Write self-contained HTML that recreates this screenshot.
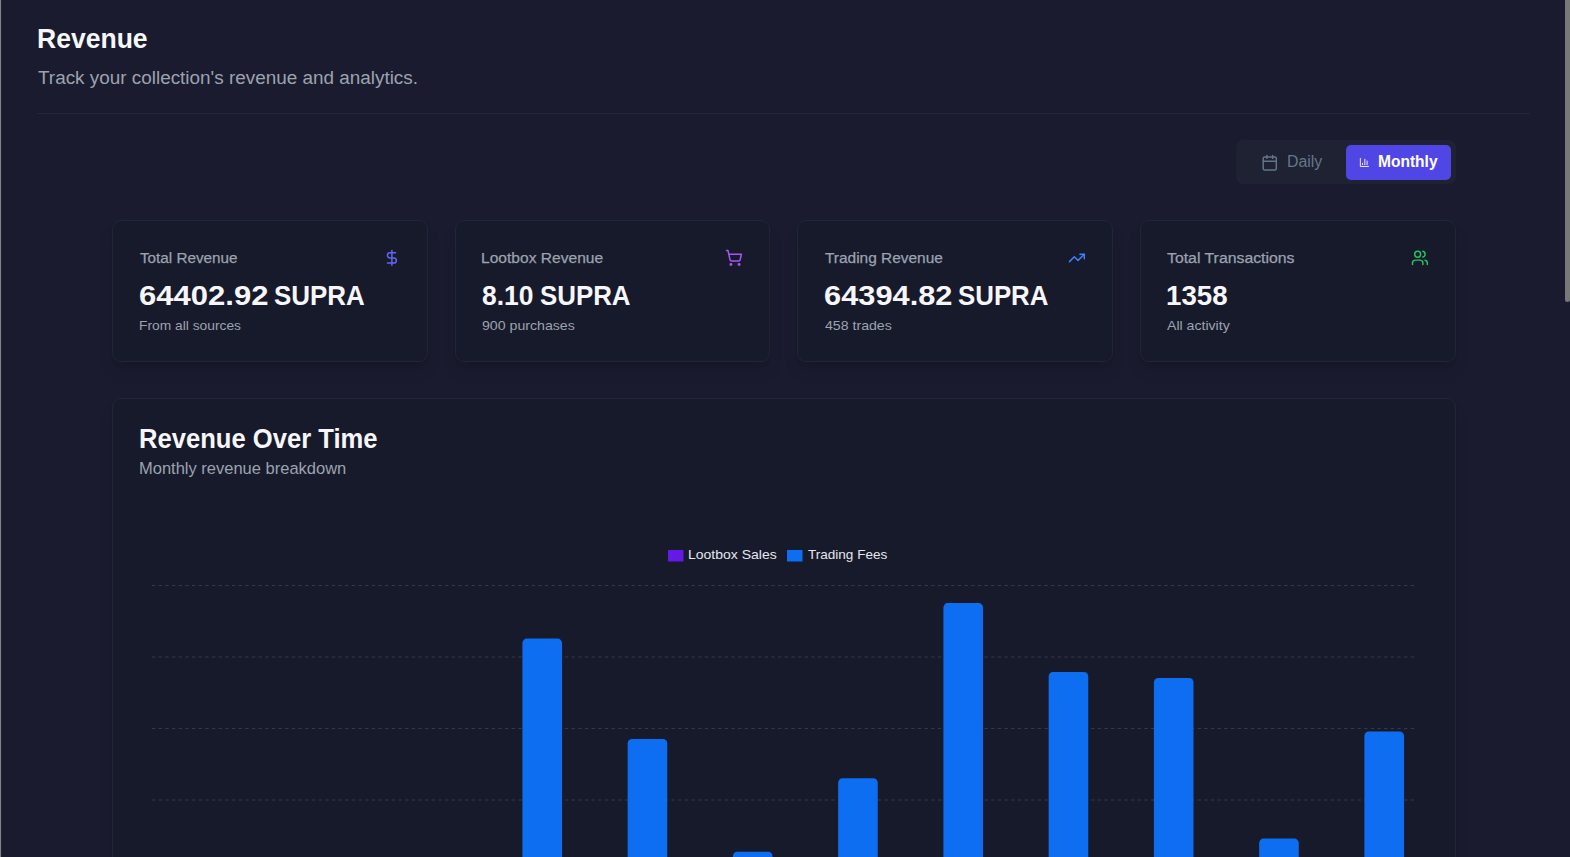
<!DOCTYPE html>
<html><head><meta charset="utf-8">
<style>
*{margin:0;padding:0;box-sizing:border-box}
html,body{width:1570px;height:857px;overflow:hidden;background:#1a1b2e;font-family:"Liberation Sans",sans-serif}
.a{position:absolute}
.t{position:absolute;white-space:nowrap;transform-origin:0 0}
.card{position:absolute;background:#171a2b;border:1px solid #1e2637;border-radius:9px;box-shadow:0 11px 17px -3px rgba(0,0,0,.12),0 4.4px 6.7px -4.4px rgba(0,0,0,.12)}
svg{position:absolute;overflow:visible}
</style></head><body>
<div class="a" style="left:0;top:0;width:1px;height:857px;background:#838383"></div>
<div class="a" style="left:1px;top:0;width:1px;height:857px;background:#1c2333"></div>
<div class="a" style="left:1565px;top:0;width:5px;height:302px;background:#787878;border-radius:0 0 3px 3px"></div>

<div class="a" style="left:37px;top:113px;width:1493px;height:1px;background:#212837"></div>

<div class="a" style="left:1236px;top:140px;width:220px;height:43.8px;background:#1e2232;border-radius:7px"></div>
<div class="a" style="left:1346px;top:145px;width:105px;height:34.8px;background:#4f46e5;border-radius:5px"></div>
<svg style="left:1260.9px;top:154.2px" width="17.5" height="17.5" viewBox="0 0 24 24" fill="none" stroke="#64748b" stroke-width="2" stroke-linecap="round" stroke-linejoin="round"><path d="M8 2v4"/><path d="M16 2v4"/><rect width="18" height="18" x="3" y="4" rx="2"/><path d="M3 10h18"/></svg>
<svg style="left:1359px;top:156.7px" width="10.8" height="10.8" viewBox="0 0 24 24" fill="none" stroke="#ffffff" stroke-width="2" stroke-linecap="round" stroke-linejoin="round"><path d="M3 3v18h18"/><path d="M18 17V9"/><path d="M13 17V5"/><path d="M8 17v-3"/></svg>

<div class="card" style="left:112px;top:220px;width:316px;height:142px"></div>
<div class="card" style="left:454.5px;top:220px;width:315.7px;height:142px"></div>
<div class="card" style="left:797.33px;top:220px;width:316px;height:142px"></div>
<div class="card" style="left:1139.6px;top:220px;width:316px;height:142px"></div>

<svg style="left:383px;top:249.2px" width="17.8" height="17.8" viewBox="0 0 24 24" fill="none" stroke="#6366f1" stroke-width="2" stroke-linecap="round" stroke-linejoin="round"><line x1="12" x2="12" y1="2" y2="22"/><path d="M17 5H9.5a3.5 3.5 0 0 0 0 7h5a3.5 3.5 0 0 1 0 7H6"/></svg>
<svg style="left:724.8px;top:248.7px" width="17.8" height="17.8" viewBox="0 0 24 24" fill="none" stroke="#a855f7" stroke-width="2" stroke-linecap="round" stroke-linejoin="round"><circle cx="8" cy="21" r="1"/><circle cx="19" cy="21" r="1"/><path d="M2.05 2.05h2l2.66 12.42a2 2 0 0 0 2 1.58h9.78a2 2 0 0 0 1.95-1.57l1.65-7.43H5.12"/></svg>
<svg style="left:1068.4px;top:249.2px" width="17.8" height="17.8" viewBox="0 0 24 24" fill="none" stroke="#3b82f6" stroke-width="2" stroke-linecap="round" stroke-linejoin="round"><polyline points="22 7 13.5 15.5 8.5 10.5 2 17"/><polyline points="16 7 22 7 22 13"/></svg>
<svg style="left:1411px;top:249.2px" width="17.8" height="17.8" viewBox="0 0 24 24" fill="none" stroke="#22c55e" stroke-width="2" stroke-linecap="round" stroke-linejoin="round"><path d="M16 21v-2a4 4 0 0 0-4-4H6a4 4 0 0 0-4 4v2"/><circle cx="9" cy="7" r="4"/><path d="M22 21v-2a4 4 0 0 0-3-3.87"/><path d="M16 3.13a4 4 0 0 1 0 7.75"/></svg>

<div class="card" style="left:112px;top:398px;width:1344px;height:520px"></div>

<svg style="left:0;top:0" width="1570" height="857">
 <g stroke="#313a4c" stroke-width="1.1" stroke-dasharray="3.33 3.33">
  <line x1="152" x2="1415" y1="585.5" y2="585.5"/>
  <line x1="152" x2="1415" y1="657" y2="657"/>
  <line x1="152" x2="1415" y1="728.5" y2="728.5"/>
  <line x1="152" x2="1415" y1="800" y2="800"/>
 </g>
 <rect x="668" y="550" width="15.5" height="11.5" fill="#6419e6"/>
 <rect x="787" y="550" width="15.5" height="11.5" fill="#0e6ef2"/>
 <g fill="#0e6ef2">
  <path d="M522.40 870V643.00a4.4 4.4 0 0 1 4.4 -4.4h30.80a4.4 4.4 0 0 1 4.4 4.4V870z"/>
  <path d="M627.65 870V743.30a4.4 4.4 0 0 1 4.4 -4.4h30.80a4.4 4.4 0 0 1 4.4 4.4V870z"/>
  <path d="M732.90 870V856.10a4.4 4.4 0 0 1 4.4 -4.4h30.80a4.4 4.4 0 0 1 4.4 4.4V870z"/>
  <path d="M838.15 870V782.60a4.4 4.4 0 0 1 4.4 -4.4h30.80a4.4 4.4 0 0 1 4.4 4.4V870z"/>
  <path d="M943.40 870V607.50a4.4 4.4 0 0 1 4.4 -4.4h30.80a4.4 4.4 0 0 1 4.4 4.4V870z"/>
  <path d="M1048.65 870V676.30a4.4 4.4 0 0 1 4.4 -4.4h30.80a4.4 4.4 0 0 1 4.4 4.4V870z"/>
  <path d="M1153.90 870V682.30a4.4 4.4 0 0 1 4.4 -4.4h30.80a4.4 4.4 0 0 1 4.4 4.4V870z"/>
  <path d="M1259.15 870V843.00a4.4 4.4 0 0 1 4.4 -4.4h30.80a4.4 4.4 0 0 1 4.4 4.4V870z"/>
  <path d="M1364.40 870V735.80a4.4 4.4 0 0 1 4.4 -4.4h30.80a4.4 4.4 0 0 1 4.4 4.4V870z"/>
 </g>
</svg>
<div class="t" style="left:37.35px;top:25.20px;font-size:28px;line-height:28px;font-weight:700;color:#f7f7fb;transform:scaleX(0.9478);">Revenue</div>
<div class="t" style="left:38.00px;top:68.90px;font-size:18px;line-height:18px;font-weight:400;color:#9ca3af;transform:scaleX(1.0499);">Track your collection&#x27;s revenue and analytics.</div>
<div class="t" style="left:1287.29px;top:154.00px;font-size:15.8px;line-height:15.8px;font-weight:400;color:#66758c;transform:scaleX(1.0057);">Daily</div>
<div class="t" style="left:1377.72px;top:154.00px;font-size:15.8px;line-height:15.8px;font-weight:700;color:#ffffff;transform:scaleX(0.9833);">Monthly</div>
<div class="t" style="left:139.90px;top:250.00px;font-size:15.5px;line-height:15.5px;font-weight:400;color:#9ca3af;transform:scaleX(0.9838);-webkit-text-stroke:0.25px currentColor;">Total Revenue</div>
<div class="t" style="left:480.70px;top:250.20px;font-size:15.5px;line-height:15.5px;font-weight:400;color:#9ca3af;transform:scaleX(1.0050);-webkit-text-stroke:0.25px currentColor;">Lootbox Revenue</div>
<div class="t" style="left:824.60px;top:250.20px;font-size:15.5px;line-height:15.5px;font-weight:400;color:#9ca3af;transform:scaleX(0.9958);-webkit-text-stroke:0.25px currentColor;">Trading Revenue</div>
<div class="t" style="left:1167.30px;top:250.00px;font-size:15.5px;line-height:15.5px;font-weight:400;color:#9ca3af;transform:scaleX(1.0208);-webkit-text-stroke:0.25px currentColor;">Total Transactions</div>
<div class="t" style="left:138.59px;top:282.40px;font-size:28px;line-height:28px;font-weight:700;color:#f7f7fb;transform:scaleX(1.1087);">64402.92</div>
<div class="t" style="left:274.47px;top:282.40px;font-size:28px;line-height:28px;font-weight:700;color:#f7f7fb;transform:scaleX(0.9268);">SUPRA</div>
<div class="t" style="left:482.10px;top:282.40px;font-size:28px;line-height:28px;font-weight:700;color:#f7f7fb;transform:scaleX(0.9444);">8.10</div>
<div class="t" style="left:539.58px;top:282.40px;font-size:28px;line-height:28px;font-weight:700;color:#f7f7fb;transform:scaleX(0.9237);">SUPRA</div>
<div class="t" style="left:823.50px;top:282.40px;font-size:28px;line-height:28px;font-weight:700;color:#f7f7fb;transform:scaleX(1.1000);">64394.82</div>
<div class="t" style="left:958.08px;top:282.40px;font-size:28px;line-height:28px;font-weight:700;color:#f7f7fb;transform:scaleX(0.9227);">SUPRA</div>
<div class="t" style="left:1166.31px;top:282.40px;font-size:28px;line-height:28px;font-weight:700;color:#f7f7fb;transform:scaleX(0.9885);">1358</div>
<div class="t" style="left:138.87px;top:318.80px;font-size:13.4px;line-height:13.4px;font-weight:400;color:#9ca3af;transform:scaleX(1.0306);">From all sources</div>
<div class="t" style="left:481.70px;top:318.80px;font-size:13.4px;line-height:13.4px;font-weight:400;color:#9ca3af;transform:scaleX(1.0557);">900 purchases</div>
<div class="t" style="left:824.60px;top:318.60px;font-size:13.4px;line-height:13.4px;font-weight:400;color:#9ca3af;transform:scaleX(1.0556);">458 trades</div>
<div class="t" style="left:1167.30px;top:318.80px;font-size:13.4px;line-height:13.4px;font-weight:400;color:#9ca3af;transform:scaleX(1.0533);">All activity</div>
<div class="t" style="left:138.95px;top:425.80px;font-size:27px;line-height:27px;font-weight:700;color:#f7f7fb;transform:scaleX(0.9480);">Revenue Over Time</div>
<div class="t" style="left:138.59px;top:459.80px;font-size:16.3px;line-height:16.3px;font-weight:400;color:#9ca3af;transform:scaleX(1.0133);">Monthly revenue breakdown</div>
<div class="t" style="left:688.25px;top:547.90px;font-size:13.3px;line-height:13.3px;font-weight:400;color:#e5e7eb;transform:scaleX(1.0530);">Lootbox Sales</div>
<div class="t" style="left:807.60px;top:547.90px;font-size:13.3px;line-height:13.3px;font-weight:400;color:#e5e7eb;transform:scaleX(1.0179);">Trading Fees</div>
</body></html>
